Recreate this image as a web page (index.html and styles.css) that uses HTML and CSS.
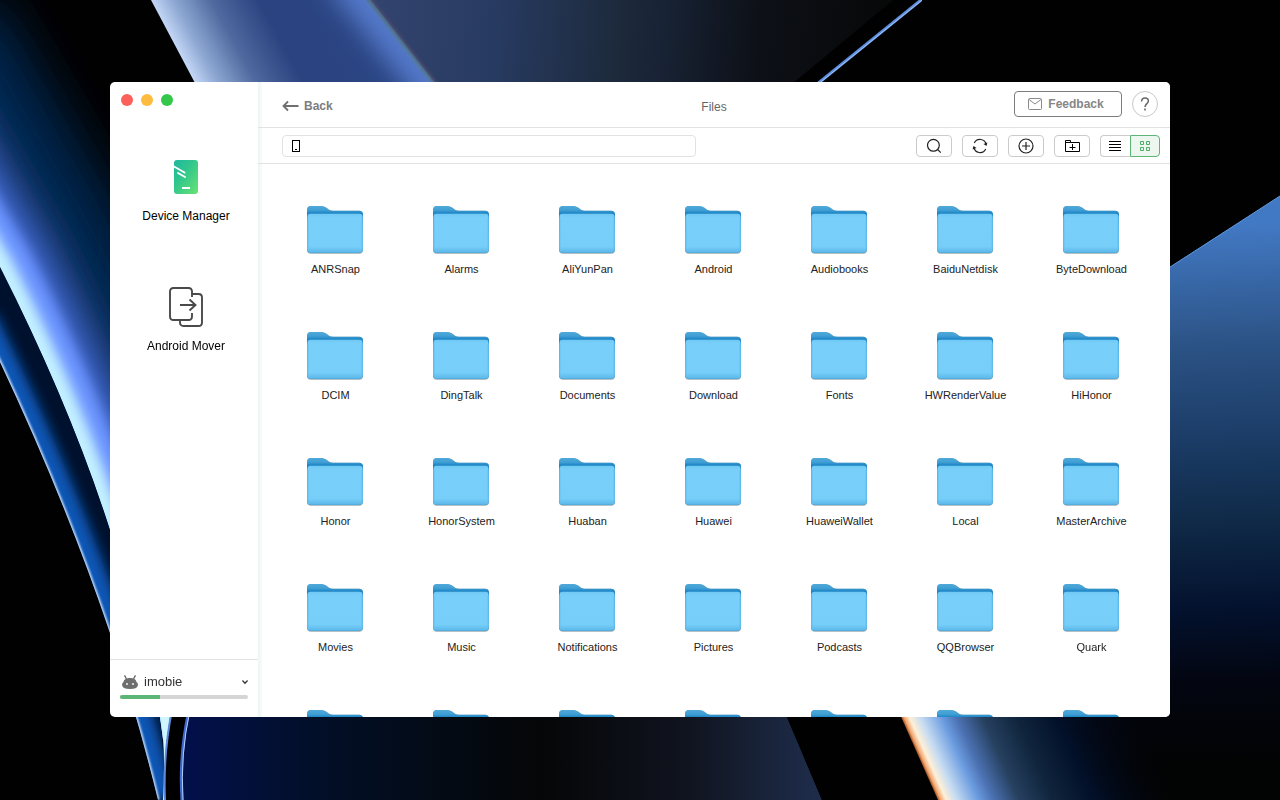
FILE: index.html
```html
<!DOCTYPE html>
<html lang="en">
<head>
<meta charset="utf-8">
<meta name="viewport" content="width=device-width, initial-scale=1">
<title>Files</title>
<link rel="stylesheet" href="styles.css">
</head>
<body>
<svg class="wallpaper" viewBox="0 0 1280 800" preserveAspectRatio="xMidYMid slice" aria-hidden="true">
  <defs>
    <clipPath id="c-sky"><path d="M-10 -10H155L200 90V740H163C158 690 135 600 110 530Q70 405 0 267L-10 250Z"/></clipPath>
    <clipPath id="c-beam"><path d="M0 362Q65 500 110 633Q137 714 158 800H164V770C163 700 138 605 110 530Q70 405 0 267Z"/></clipPath>
    <clipPath id="c-top"><path d="M151 0H367L432 82L440 100H204Z"/></clipPath>
    <filter id="b24" x="-50%" y="-50%" width="200%" height="200%"><feGaussianBlur stdDeviation="26"/></filter>
    <filter id="b12" x="-50%" y="-50%" width="200%" height="200%"><feGaussianBlur stdDeviation="12"/></filter>
    <filter id="b6" x="-50%" y="-50%" width="200%" height="200%"><feGaussianBlur stdDeviation="6"/></filter>
    <filter id="b1" x="-50%" y="-50%" width="200%" height="200%"><feGaussianBlur stdDeviation="1"/></filter>
    <linearGradient id="g-top" gradientUnits="userSpaceOnUse" x1="151" y1="0" x2="318" y2="-90">
      <stop offset="0" stop-color="#c3d6f5"/><stop offset=".1" stop-color="#8fa9d4"/><stop offset=".28" stop-color="#50699f"/><stop offset=".5" stop-color="#2b4380"/><stop offset="1" stop-color="#2b4684"/>
    </linearGradient>
    <linearGradient id="g-mid" gradientUnits="userSpaceOnUse" x1="370" y1="0" x2="890" y2="40">
      <stop offset="0" stop-color="#33456f"/><stop offset=".25" stop-color="#273a60"/><stop offset=".48" stop-color="#1d2a3c"/><stop offset=".56" stop-color="#182335"/><stop offset=".75" stop-color="#0d1017"/><stop offset="1" stop-color="#070808"/>
    </linearGradient>
    <linearGradient id="g-right" gradientUnits="userSpaceOnUse" x1="1225" y1="225" x2="1245" y2="760">
      <stop offset="0" stop-color="#4279c4"/><stop offset=".22" stop-color="#2c5386"/><stop offset=".4" stop-color="#1b3c66"/><stop offset=".56" stop-color="#0f2946"/><stop offset=".72" stop-color="#03112d"/><stop offset=".85" stop-color="#030611"/><stop offset="1" stop-color="#020303"/>
    </linearGradient>
    <linearGradient id="g-low" gradientUnits="userSpaceOnUse" x1="181" y1="0" x2="815" y2="0">
      <stop offset="0" stop-color="#02104c"/><stop offset=".2" stop-color="#020f2a"/><stop offset=".4" stop-color="#030b16"/><stop offset=".57" stop-color="#050607"/><stop offset=".8" stop-color="#10141f"/><stop offset="1" stop-color="#1e2c4a"/>
    </linearGradient>
    <linearGradient id="g-flare" gradientUnits="userSpaceOnUse" x1="901" y1="717" x2="1101" y2="628">
      <stop offset="0" stop-color="#9c4a1c"/><stop offset=".012" stop-color="#f0a56e"/><stop offset=".035" stop-color="#fff0d8"/><stop offset=".08" stop-color="#c7dcf2"/><stop offset=".17" stop-color="#6b9ce0"/><stop offset=".23" stop-color="#4c72b3"/><stop offset=".34" stop-color="#26405f"/><stop offset=".48" stop-color="#10253d"/><stop offset=".65" stop-color="#021029"/><stop offset="1" stop-color="#02040d" stop-opacity="0"/>
    </linearGradient>
  </defs>
  <rect width="1280" height="800" fill="#010101"/>
  <g clip-path="url(#c-sky)" fill="none">
    <path d="M-120 60L0 267Q70 405 110 530C135 600 158 690 163 740" stroke="#04264f" stroke-width="260" filter="url(#b24)"/>
    <path d="M-120 60L0 267Q70 405 110 530C135 600 158 690 163 740" stroke="#12396f" stroke-width="146" filter="url(#b12)"/>
    <path d="M-120 60L0 267Q70 405 110 530C135 600 158 690 163 740" stroke="#3c63c6" stroke-width="98" filter="url(#b12)"/>
    <path d="M-120 60L0 267Q70 405 110 530C135 600 158 690 163 740" stroke="#6c94ff" stroke-width="66" filter="url(#b6)"/>
    <path d="M-120 60L0 267Q70 405 110 530C135 600 158 690 163 740" stroke="#c3f0ff" stroke-width="28" filter="url(#b6)"/>
  </g>
  <g clip-path="url(#c-beam)">
    <rect y="250" width="180" height="560" fill="#00112e"/>
    <path d="M-20 320L0 362Q65 500 110 633Q137 714 158 800" fill="none" stroke="#0a56b6" stroke-width="34" filter="url(#b6)"/>
    <path d="M-20 320L0 362Q65 500 110 633Q137 714 158 800" fill="none" stroke="#d5e8ff" stroke-width="3" filter="url(#b1)"/>
  </g>
  <path d="M160 710H173Q163 755 165 800H163Q166 750 160 710Z" fill="#cff5ff"/>
  <path d="M171 710Q163 755 165 800H181Q179 755 189 710Z" fill="#000"/>
  <path d="M172 710Q163 755 165 800" fill="none" stroke="#5f89dc" stroke-width="2"/>
  <path d="M189 710Q179 755 182 800H822L784 710Z" fill="url(#g-low)"/>
  <path d="M189 710Q179 755 182 800" fill="none" stroke="#3f68cc" stroke-width="3"/>
  <path d="M190 710Q180 755 183 800" fill="none" stroke="#b7cdfa" stroke-width="1"/>
  <path d="M367 0H893L780 94H441Z" fill="url(#g-mid)"/>
  <g clip-path="url(#c-top)">
    <rect x="140" width="310" height="100" fill="url(#g-top)"/>
    <path d="M345 -28L455 110" stroke="#5579cb" stroke-width="44" fill="none" filter="url(#b12)"/>
  </g>
  <path d="M367 -2L437 88" stroke="#557a99" stroke-width="4" filter="url(#b1)"/>
  <path d="M371 -2L441 88" stroke="#4b4468" stroke-width="2" filter="url(#b1)"/>
  <path d="M921 0L811 89" stroke="#5d8ede" stroke-width="3"/>
  <path d="M922 0L812 89" stroke="#a1c3f4" stroke-width="1"/>
  <path d="M1000 377L1280 196V800H1000Z" fill="url(#g-right)"/>
  <path d="M1150 280L1280 196" stroke="#5e9de4" stroke-width="1"/>
  <path d="M787 717H910L948 800H822Z" fill="#010101"/>
  <path d="M898 710L938 800H1280V700Z" fill="url(#g-flare)"/>
</svg>

<svg class="sprite" aria-hidden="true">
  <defs>
    <linearGradient id="g-front" x1="0" y1="0" x2="0" y2="1"><stop offset="0" stop-color="#6fc8f4"/><stop offset=".1" stop-color="#78cff9"/><stop offset=".84" stop-color="#77cff9"/><stop offset=".92" stop-color="#69c2f0"/><stop offset="1" stop-color="#5ab8ea"/></linearGradient>
    <linearGradient id="g-back" x1="0" y1="0" x2="0" y2="1"><stop offset="0" stop-color="#4fa9da"/><stop offset=".09" stop-color="#409fd4"/><stop offset=".15" stop-color="#1f86c6"/><stop offset="1" stop-color="#4aa6d8"/></linearGradient>
    <symbol id="folder" viewBox="0 0 58 48">
      <path d="M1 4Q1 0 5 0H15Q18 0 20 1.500L23 3.800Q24.500 4.800 27 4.800H53Q57 4.800 57 9V44Q57 47.700 53 47.700H5Q1 47.700 1 44Z" fill="#9daab1"/>
      <path d="M1 4Q1 0 5 0H15Q18 0 20 1.500L23 3.800Q24.500 4.800 27 4.800H53Q57 4.800 57 9V43Q57 47 53 47H5Q1 47 1 43Z" fill="url(#g-back)"/>
      <rect x="1.500" y="7.800" width="55" height="38.800" rx="3" fill="url(#g-front)"/>
      <path d="M2 12V43M56 12V43" stroke="#66c1ee" stroke-width="1"/>
    </symbol>
  </defs>
</svg>

<div class="window">
  <aside class="sidebar">
    <div class="lights">
      <button class="light red" aria-label="Close"></button>
      <button class="light amber" aria-label="Minimize"></button>
      <button class="light green" aria-label="Zoom"></button>
    </div>
    <nav class="nav">
      <a class="nav-item" href="#device">
        <svg width="40" height="40" viewBox="0 0 40 40">
          <defs><linearGradient id="g-dev" x1="0" y1="0" x2="1" y2="1"><stop offset="0" stop-color="#1fb7a0"/><stop offset=".4" stop-color="#30c68c"/><stop offset="1" stop-color="#69e374"/></linearGradient></defs>
          <rect x="8" y="3" width="24" height="34" rx="3" fill="url(#g-dev)"/>
          <path d="M8 9.500L18.500 15.500M12 16L19 20" stroke="#fff" stroke-width="1.900" stroke-linecap="round"/>
          <path d="M16 31H24" stroke="#fff" stroke-width="1.900"/>
        </svg>
        <span>Device Manager</span>
      </a>
      <a class="nav-item" href="#mover">
        <svg width="40" height="40" viewBox="0 0 40 40" fill="none" stroke="#4a4a4a" stroke-width="1.900">
          <path d="M26 10V4.500Q26 1 22.500 1H7.500Q4 1 4 4.500V29.500Q4 33 7.500 33H22.500Q26 33 26 29.500V26"/>
          <path d="M26 7H32.500Q36 7 36 10.500V35.500Q36 39 32.500 39H17.500Q14 39 14 35.500V33"/>
          <path d="M14 18H29M23.500 12.500L29.500 18L23.500 23.500"/>
        </svg>
        <span>Android Mover</span>
      </a>
    </nav>
    <div class="device">
      <button class="device-name">
        <svg width="16" height="14" viewBox="1 0 16 14" fill="#6e6e6e">
          <path d="M3.500 .3L5.500 4M14.500 .3L12.500 4" stroke="#6e6e6e" stroke-width="1.400"/>
          <path d="M2.500 7C3 1.500 15 1.500 15.500 7Q17 8 17 9.500Q17 14 9 14Q1 14 1 9.500Q1 8 2.500 7Z"/>
          <circle cx="6" cy="9" r=".9" fill="#fff"/><circle cx="12" cy="9" r=".9" fill="#fff"/>
        </svg>
        <span>imobie</span>
        <svg class="chevron" width="6" height="6" viewBox="1 0 6 6" fill="none" stroke="#333" stroke-width="1.300"><path d="M1.400 1.500L4 4.200L6.600 1.500"/></svg>
      </button>
      <progress class="storage" max="100" value="31" aria-label="Storage used"></progress>
    </div>
  </aside>

  <main class="main">
    <header class="header">
      <button class="back">
        <svg width="18" height="12" viewBox="0 0 18 12" fill="none" stroke="#6f6f6f" stroke-width="1.800"><path d="M1.500 6H16.500M6 1.500L1.500 6L6 10.500"/></svg>
        <span>Back</span>
      </button>
      <h1 class="title">Files</h1>
      <div class="header-actions">
        <button class="feedback">
          <svg width="14" height="12" viewBox="0 0 14 12" fill="none" stroke="#8a8a8a"><rect x=".5" y=".5" width="13" height="11" rx="1"/><path d="M1 1.500L7 6L13 1.500"/></svg>
          <span>Feedback</span>
        </button>
        <button class="help" aria-label="Help">
          <svg width="10" height="14" viewBox="0 0 10 14" fill="none" stroke="#666" stroke-width="1.500"><path d="M1.600 4.500C1.600 -.2 8.400 -.2 8.400 4C8.400 6.700 5 6.500 5 10"/><path d="M5 11.600V13.400" stroke-width="1.600"/></svg>
        </button>
      </div>
    </header>

    <div class="toolbar">
      <label class="path">
        <svg width="8" height="12" viewBox="0 0 8 12" fill="none" stroke="#000"><rect x=".5" y=".5" width="7" height="11"/><path d="M3 9.500H5"/></svg>
        <input type="text" aria-label="Path">
      </label>
      <div class="tools">
        <button class="tool" aria-label="Search"><svg width="16" height="16" viewBox="0 0 16 16" fill="none" stroke="#222" stroke-width="1.200"><circle cx="7.400" cy="7.300" r="5.900"/><path d="M11.600 11.500L14.800 14.600"/></svg></button>
        <button class="tool" aria-label="Refresh"><svg width="16" height="16" viewBox="0 0 16 16" fill="none" stroke="#222" stroke-width="1.200"><path d="M2.300 5A6.300 6.300 0 0 1 14.200 6.800M13.700 11A6.300 6.300 0 0 1 1.800 9.200"/><path d="M15.400 4.500L14.500 8L11.500 6ZM.6 11.500L1.500 8L4.500 10Z" fill="#222" stroke="none"/></svg></button>
        <button class="tool" aria-label="Add"><svg width="16" height="16" viewBox="0 0 16 16" fill="none" stroke="#222" stroke-width="1.200"><circle cx="8" cy="8" r="7"/><path d="M8 4V12M4 8H12"/></svg></button>
        <button class="tool" aria-label="New folder"><svg width="16" height="14" viewBox="0 0 16 14" fill="none" stroke="#000"><path d="M1.500 12.500V1.500H6.500V3.500H15.500V12.500ZM1.500 3.500H6.500M8.500 5V11M5.500 8.500H11.500"/></svg></button>
        <div class="views">
          <button class="view" aria-label="List view"><svg width="12" height="10" viewBox="0 0 12 10" stroke="#000"><path d="M0 .5H12M0 3.500H12M0 6.500H12M0 9.500H12"/></svg></button>
          <button class="view active" aria-label="Grid view"><svg width="10" height="10" viewBox="0 0 10 10" fill="none" stroke="#4dae69"><path d="M.5 .5H3.500V3.500H.5ZM6.500 .5H9.500V3.500H6.500ZM.5 6.500H3.500V9.500H.5ZM6.500 6.500H9.500V9.500H6.500Z"/></svg></button>
        </div>
      </div>
    </div>

    <div class="files">
      <div class="file"><svg class="folder"><use href="#folder"/></svg><span>ANRSnap</span></div>
      <div class="file"><svg class="folder"><use href="#folder"/></svg><span>Alarms</span></div>
      <div class="file"><svg class="folder"><use href="#folder"/></svg><span>AliYunPan</span></div>
      <div class="file"><svg class="folder"><use href="#folder"/></svg><span>Android</span></div>
      <div class="file"><svg class="folder"><use href="#folder"/></svg><span>Audiobooks</span></div>
      <div class="file"><svg class="folder"><use href="#folder"/></svg><span>BaiduNetdisk</span></div>
      <div class="file"><svg class="folder"><use href="#folder"/></svg><span>ByteDownload</span></div>
      <div class="file"><svg class="folder"><use href="#folder"/></svg><span>DCIM</span></div>
      <div class="file"><svg class="folder"><use href="#folder"/></svg><span>DingTalk</span></div>
      <div class="file"><svg class="folder"><use href="#folder"/></svg><span>Documents</span></div>
      <div class="file"><svg class="folder"><use href="#folder"/></svg><span>Download</span></div>
      <div class="file"><svg class="folder"><use href="#folder"/></svg><span>Fonts</span></div>
      <div class="file"><svg class="folder"><use href="#folder"/></svg><span>HWRenderValue</span></div>
      <div class="file"><svg class="folder"><use href="#folder"/></svg><span>HiHonor</span></div>
      <div class="file"><svg class="folder"><use href="#folder"/></svg><span>Honor</span></div>
      <div class="file"><svg class="folder"><use href="#folder"/></svg><span>HonorSystem</span></div>
      <div class="file"><svg class="folder"><use href="#folder"/></svg><span>Huaban</span></div>
      <div class="file"><svg class="folder"><use href="#folder"/></svg><span>Huawei</span></div>
      <div class="file"><svg class="folder"><use href="#folder"/></svg><span>HuaweiWallet</span></div>
      <div class="file"><svg class="folder"><use href="#folder"/></svg><span>Local</span></div>
      <div class="file"><svg class="folder"><use href="#folder"/></svg><span>MasterArchive</span></div>
      <div class="file"><svg class="folder"><use href="#folder"/></svg><span>Movies</span></div>
      <div class="file"><svg class="folder"><use href="#folder"/></svg><span>Music</span></div>
      <div class="file"><svg class="folder"><use href="#folder"/></svg><span>Notifications</span></div>
      <div class="file"><svg class="folder"><use href="#folder"/></svg><span>Pictures</span></div>
      <div class="file"><svg class="folder"><use href="#folder"/></svg><span>Podcasts</span></div>
      <div class="file"><svg class="folder"><use href="#folder"/></svg><span>QQBrowser</span></div>
      <div class="file"><svg class="folder"><use href="#folder"/></svg><span>Quark</span></div>
      <div class="file"><svg class="folder"><use href="#folder"/></svg></div>
      <div class="file"><svg class="folder"><use href="#folder"/></svg></div>
      <div class="file"><svg class="folder"><use href="#folder"/></svg></div>
      <div class="file"><svg class="folder"><use href="#folder"/></svg></div>
      <div class="file"><svg class="folder"><use href="#folder"/></svg></div>
      <div class="file"><svg class="folder"><use href="#folder"/></svg></div>
      <div class="file"><svg class="folder"><use href="#folder"/></svg></div>
    </div>
  </main>
</div>
</body>
</html>
```

FILE: styles.css
```css
* { box-sizing: border-box; }

body {
  margin: 0;
  height: 100vh;
  padding: 82px 110px 83px;
  display: flex;
  overflow: hidden;
  background: #000;
  font: 12px/16px "Liberation Sans", Helvetica, Arial, sans-serif;
  color: #222;
}

button {
  font: inherit;
  color: inherit;
  padding: 0;
  border: 0;
  background: none;
  display: flex;
  align-items: center;
  justify-content: center;
}

svg { display: block; flex: none; }

.wallpaper {
  position: fixed;
  inset: 0;
  width: 100%;
  height: 100%;
  z-index: -1;
}

.sprite { position: absolute; width: 0; height: 0; }

.window {
  flex: 1;
  min-width: 0;
  display: flex;
  background: #fff;
  border-radius: 5px;
  overflow: hidden;
}

.sidebar {
  flex: none;
  width: 148px;
  display: flex;
  flex-direction: column;
}

.lights { display: flex; gap: 8px; padding: 12px 11px 0; }
.light { width: 12px; height: 12px; border-radius: 50%; }
.red { background: #fc605b; }
.amber { background: #fdbc40; }
.green { background: #34c749; }

.nav {
  flex: 1;
  display: flex;
  flex-direction: column;
  gap: 63px;
  padding: 51px 0 0 4px;
}

.nav-item {
  display: flex;
  flex-direction: column;
  align-items: center;
  gap: 11px;
  color: #000;
  text-decoration: none;
}

.device {
  border-top: 1px solid #e2e2e2;
  padding: 14px 10px 18px;
  display: flex;
  flex-direction: column;
  gap: 5px;
}

.device-name { gap: 6px; padding-left: 2px; font-size: 13px; color: #333; }
.device-name .chevron { margin-left: auto; }

.storage {
  appearance: none;
  display: block;
  width: 100%;
  height: 4px;
  border: 0;
  border-radius: 2px;
  overflow: hidden;
  background: #d5d5d5;
}
.storage::-webkit-progress-bar { background: #d5d5d5; }
.storage::-webkit-progress-value { background: #5cb676; }

.main {
  flex: 1;
  min-width: 0;
  display: flex;
  flex-direction: column;
  background: linear-gradient(90deg, #edf6f4, #f4faf9 3px, #fff 5px);
}

.header {
  display: grid;
  grid-template-columns: 1fr auto 1fr;
  align-items: center;
  height: 46px;
  padding: 0 12px 2px;
  border-bottom: 1px solid #e2e2e2;
}

.back { justify-self: start; gap: 4px; padding: 4px 0 0 12px; font-weight: bold; color: #7d7d7d; }
.title { margin: 0; padding-top: 6px; font-size: 12px; font-weight: normal; color: #666; }
.header-actions { justify-self: end; display: flex; gap: 10px; }

.feedback {
  width: 108px;
  height: 26px;
  gap: 6px;
  padding-right: 4px;
  border: 1px solid #7d7d7d;
  border-radius: 4px;
  font-weight: bold;
  color: #868686;
}

.help { width: 26px; height: 26px; border: 1px solid #c9c9c9; border-radius: 50%; }

.toolbar {
  display: flex;
  align-items: center;
  justify-content: space-between;
  gap: 24px;
  height: 36px;
  padding: 0 10px 0 24px;
  border-bottom: 1px solid #e2e2e2;
}

.path {
  flex: 0 1 414px;
  display: flex;
  align-items: center;
  gap: 6px;
  height: 22px;
  padding: 0 9px;
  border: 1px solid #e2e2e2;
  border-radius: 4px;
}

.path input {
  flex: 1;
  min-width: 0;
  border: 0;
  padding: 0;
  outline: 0;
  background: none;
  font: inherit;
}

.tools { display: flex; gap: 10px; }
.tool { width: 36px; height: 22px; border: 1px solid #cbcbcb; border-radius: 4px; }
.views { display: flex; }
.view { width: 30px; height: 22px; padding-right: 1px; border: 1px solid #cbcbcb; border-right: 0; border-radius: 4px 0 0 4px; }
.view.active { padding-right: 0; border: 1px solid #5cb676; border-radius: 0 4px 4px 0; background: #edf7f0; }

.files {
  flex: 1;
  min-height: 0;
  overflow: hidden auto;
  scrollbar-width: none;
  display: grid;
  grid-template-columns: repeat(7, 1fr);
  grid-auto-rows: 126px;
  padding: 42px 16px 0 14px;
}

.file {
  display: flex;
  flex-direction: column;
  align-items: center;
  gap: 7px;
  font-size: 11px;
}

.file span { padding-left: 1px; }

.folder { width: 58px; height: 48px; }
```
